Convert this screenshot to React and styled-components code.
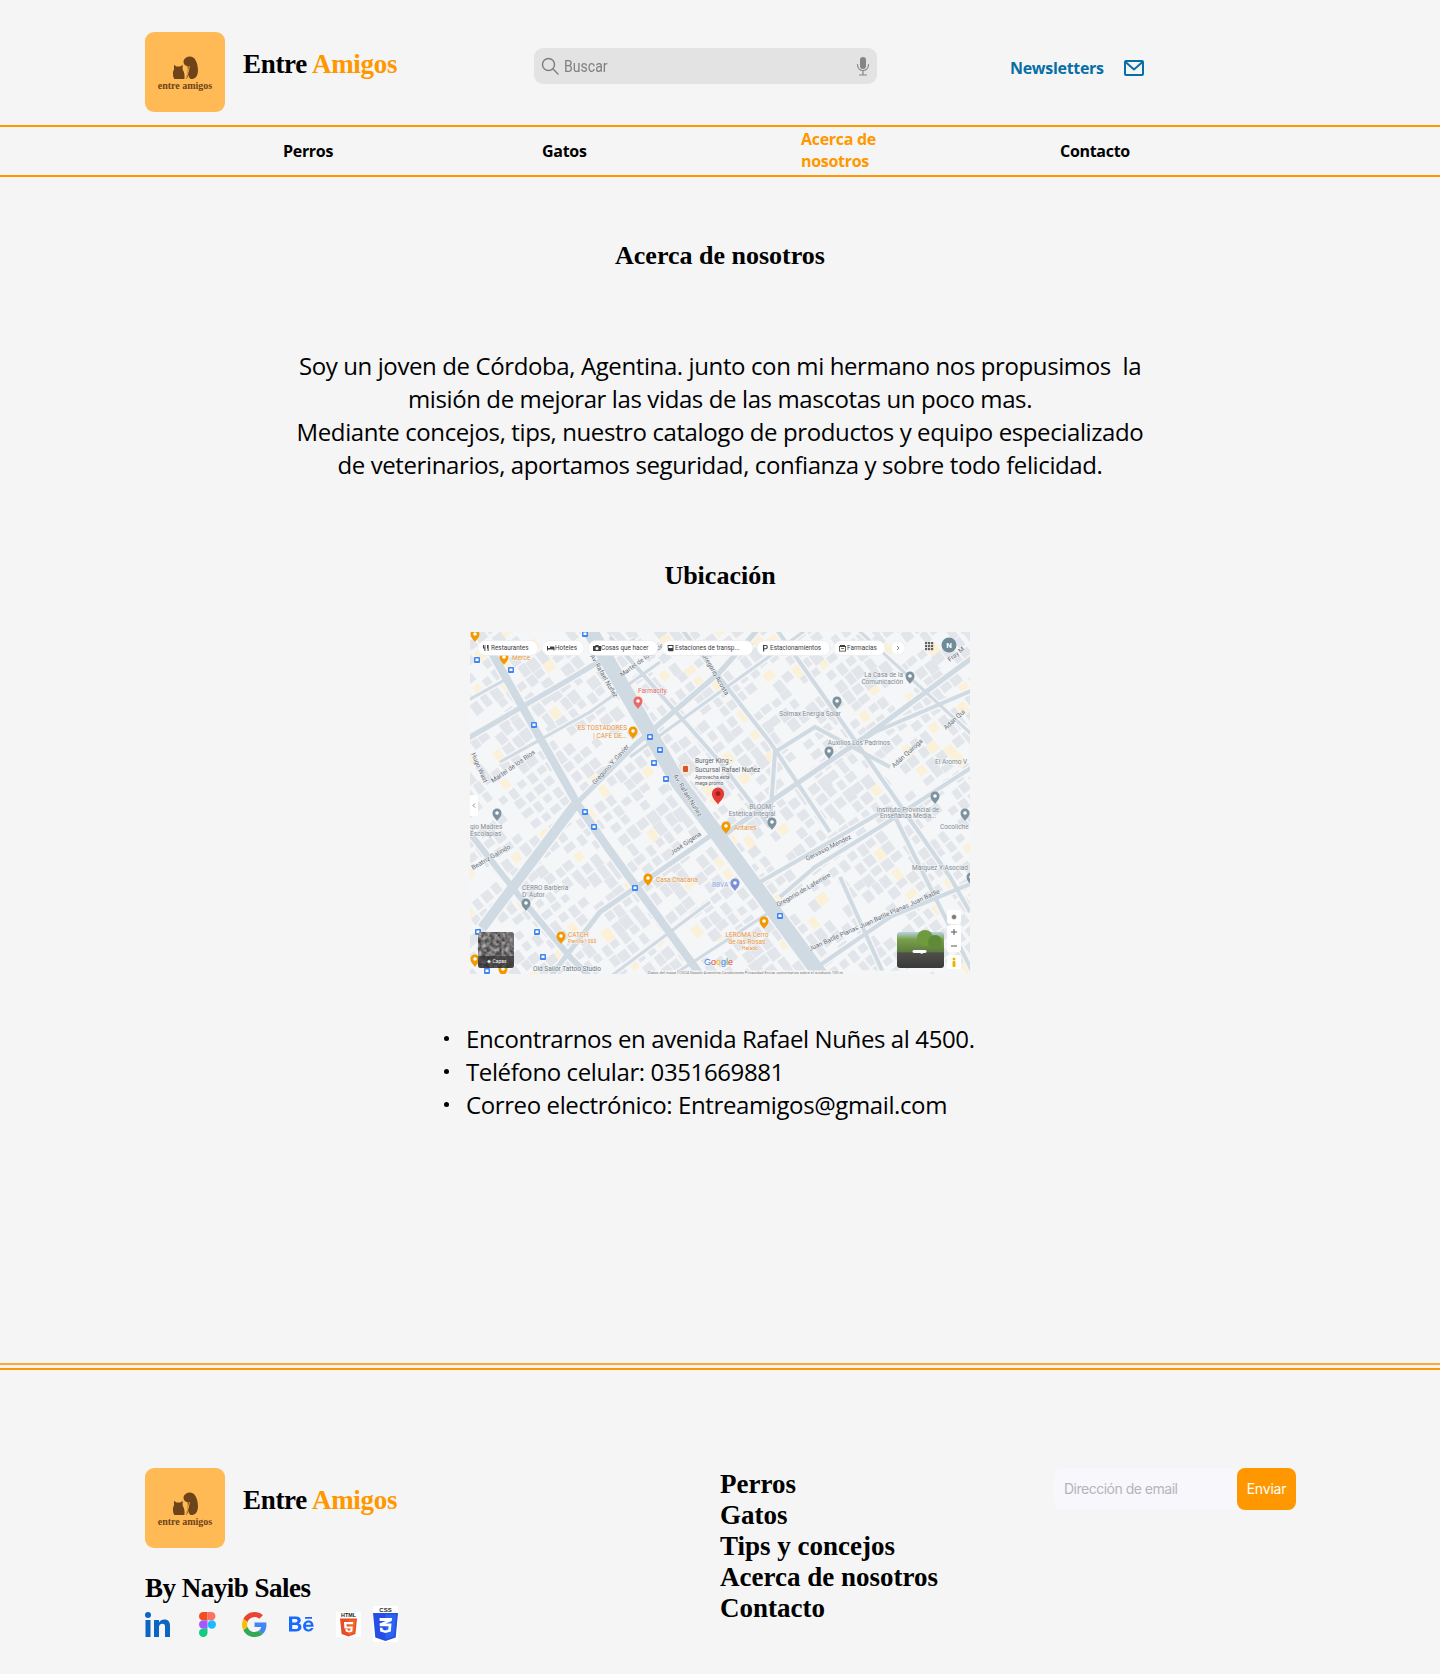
import React from "react";
import styled, { createGlobalStyle } from "styled-components";

const SERIF = `"Liberation Serif", "DejaVu Serif", serif`;
const SANS = `"Open Sans", "Noto Sans", sans-serif`;
const ORANGE = "#ff9800";

const Global = createGlobalStyle`
  html, body { margin: 0; padding: 0; background: #f5f5f5; }
  body { font-family: ${SANS}; color: #000; }
  * { box-sizing: border-box; }
`;

const Page = styled.div`
  width: 1440px;
  height: 1674px;
  background: #f5f5f5;
  display: flex;
  flex-direction: column;
`;

const Header = styled.header`
  height: 125px;
  padding: 32px 0 0 145px;
  display: flex;
  align-items: flex-start;
`;

const BrandBlock = styled.div`
  display: flex;
  align-items: flex-start;
  gap: 18px;
  width: ${p => p.$w || "auto"};
`;

const LogoTile = styled.div`
  width: 80px;
  height: 80px;
  border-radius: 9px;
  background: #ffba55;
  display: flex;
  flex-direction: column;
  align-items: center;
  justify-content: flex-start;
  padding-top: 24px;
  color: #6e4319;
`;

const LogoWords = styled.span`
  font-family: ${SERIF};
  font-weight: 700;
  font-size: 10px;
  line-height: 11px;
  margin-top: 1px;
  white-space: nowrap;
`;

const BrandTitle = styled.div`
  font-family: ${SERIF};
  font-weight: 700;
  font-size: 27px;
  letter-spacing: -0.3px;
  line-height: 32px;
  margin-top: 16px;
  white-space: nowrap;
`;

const Accent = styled.span`
  color: ${ORANGE};
`;

const Search = styled.div`
  width: 343px;
  height: 36px;
  margin-top: 16px;
  border-radius: 9px;
  background: #e3e3e3;
  display: flex;
  align-items: center;
  padding: 0 7px;
  color: #808080;
`;

const SearchText = styled.span`
  flex: 1;
  margin-left: 5px;
  font-family: Roboto, sans-serif;
  font-size: 16px;
  transform: scaleX(0.88);
  transform-origin: left center;
`;

const NewsLink = styled.div`
  margin-left: 133px;
  margin-top: 25px;
  display: flex;
  align-items: center;
  gap: 20px;
  color: #076fa5;
  font-weight: 700;
  font-size: 16px;
  letter-spacing: -0.3px;
  line-height: 22px;
`;

const Nav = styled.nav`
  height: 52px;
  border-top: 2px solid ${ORANGE};
  border-bottom: 2px solid ${ORANGE};
  display: grid;
  grid-template-columns: 283px 259px 259px 259px 1fr;
  align-items: center;
`;

const NavItem = styled.div`
  grid-column: ${p => p.$col};
  font-weight: 700;
  font-size: 16px;
  letter-spacing: -0.3px;
  line-height: 22px;
  color: ${p => (p.$active ? ORANGE : "#000")};
  padding-bottom: ${p => (p.$active ? 2 : 0)}px;
`;

const Main = styled.main`
  display: flex;
  flex-direction: column;
  align-items: center;
  flex: 1;
`;

const Heading = styled.h2`
  font-family: ${SERIF};
  font-weight: 700;
  font-size: 26px;
  line-height: 32px;
  margin: ${p => p.$m};
  text-align: center;
`;

const Lead = styled.p`
  font-size: 24px;
  line-height: 33px;
  letter-spacing: -0.39px;
  text-align: center;
  white-space: pre-wrap;
  margin: 77px 0 0;
`;

const MapFrame = styled.div`
  width: 500px;
  height: 342px;
  margin-top: 40px;
  overflow: hidden;
  flex: none;
`;

const Facts = styled.ul`
  list-style: none;
  margin: 48px 0 0;
  padding: 0;
  align-self: flex-start;
  margin-left: 442px;
  font-size: 24px;
  line-height: 33px;
  letter-spacing: -0.39px;
`;

const Fact = styled.li`
  display: flex;
  align-items: center;
  &::before {
    content: "";
    width: 5px;
    height: 5px;
    border-radius: 50%;
    background: #000;
    margin-left: 2px;
    margin-right: 17px;
  }
`;

const RuleStack = styled.div`
  display: flex;
  flex-direction: column;
  gap: 3px;
`;

const Rule = styled.div`
  height: 2px;
  background: ${p => (p.$soft ? "#ffa733" : ORANGE)};
`;

const Footer = styled.footer`
  height: 304px;
  padding: 98px 0 0 145px;
  display: flex;
  align-items: flex-start;
`;

const FooterLeft = styled.div`
  width: 575px;
`;

const Author = styled.div`
  font-family: ${SERIF};
  font-weight: 700;
  font-size: 27px;
  letter-spacing: -0.5px;
  line-height: 32px;
  margin-top: 24px;
`;

const Icons = styled.div`
  display: flex;
  align-items: center;
  margin-top: 2px;
  height: 36px;
`;

const IconSlot = styled.span`
  display: flex;
  margin-left: ${p => p.$ml || 0}px;
`;

const FooterLinks = styled.ul`
  list-style: none;
  padding: 0;
  margin: 1px 0 0;
  width: 334px;
  font-family: ${SERIF};
  font-weight: 700;
  font-size: 27px;
  line-height: 31px;
`;

const Newsletter = styled.div`
  width: 242px;
  height: 42px;
  display: flex;
  border-radius: 8px;
  background: #f8f8fc;
`;

const EmailHint = styled.span`
  flex: 1;
  padding-left: 10px;
  font-family: Inter, sans-serif;
  font-size: 14px;
  line-height: 42px;
  color: #b4b4bb;
  letter-spacing: -0.5px;
`;

const SendButton = styled.span`
  width: 59px;
  border-radius: 8px;
  background: ${ORANGE};
  color: #fff;
  font-family: Inter, sans-serif;
  font-size: 14px;
  letter-spacing: -0.2px;
  line-height: 42px;
  text-align: center;
`;

/* ---------- drawings ---------- */

const PetsMark = () => (
  <svg width="27" height="23" viewBox="0 0 27 24" fill="#6e4319">
    <path d="M11.500 5C12.500 1 18-1 21.500 1.500 24.500 3.500 26.500 9 26.500 15 26.500 21 23.500 24 19.500 24 17.800 24 17 22 16.500 19.500 16 22 15 24 13.500 24 15.500 20 16.500 15 15.500 10.500 13 10.500 11 8 11.500 5z" />
    <path d="M1.500 9l2.500 2h4l2.500-2v5c1.800 3 2.600 7 1.800 10H2C0 21 0 16 1.500 14z" />
    <path d="M17.500 10.500c-.6 4-1.500 9-4 13.500" fill="none" stroke="#ffba55" strokeWidth="0.9" />
  </svg>
);

const Logo = () => (
  <LogoTile>
    <PetsMark />
    <LogoWords>entre amigos</LogoWords>
  </LogoTile>
);

const SearchGlyph = () => (
  <svg width="18" height="18" viewBox="0 0 18 18" fill="none" stroke="#7d7d7d" strokeWidth="1.4" strokeLinecap="round">
    <circle cx="7.500" cy="7.500" r="6" />
    <path d="M12 12l5 5" />
  </svg>
);

const MicGlyph = () => (
  <svg width="14" height="20" viewBox="0 0 14 20" fill="none" stroke="#858585" strokeWidth="1.2" strokeLinecap="round">
    <rect x="4" y="1" width="6" height="12" rx="3" fill="#858585" stroke="none" />
    <path d="M1.500 8.500c0 8 11 8 11 0M7 15v3.500M3.500 19h7" />
  </svg>
);

const MailGlyph = () => (
  <svg width="20" height="16" viewBox="0 0 20 16" fill="none" stroke="#076fa5" strokeWidth="2">
    <rect x="1" y="1" width="18" height="14" rx="1" />
    <path d="M1.500 2l8.500 7.500L18.500 2" />
  </svg>
);

const LinkedInIcon = () => (
  <svg width="25" height="25" viewBox="0 0 25 25" fill="#0a66c2">
    <circle cx="3" cy="3" r="3" />
    <rect x="0.500" y="8" width="5" height="17" />
    <path d="M9 8h5v2.500C15 8.800 17 7.600 19.500 7.600 23.500 7.600 25 10.200 25 14v11h-5V15c0-2-.6-3.200-2.500-3.200-2.300 0-3.500 1.400-3.500 3.600V25H9z" />
  </svg>
);

const FigmaIcon = () => (
  <svg width="17" height="25" viewBox="0 0 17 25">
    <path d="M0 4.200A4.200 4.200 0 0 1 4.200 0h4.300v8.300H4.200A4.200 4.200 0 0 1 0 4.200z" fill="#f24e1e" />
    <path d="M8.500 0h4.300a4.200 4.200 0 0 1 0 8.300H8.500z" fill="#ff7262" />
    <path d="M0 12.500a4.200 4.200 0 0 1 4.200-4.200h4.300v8.400H4.200A4.200 4.200 0 0 1 0 12.500z" fill="#a259ff" />
    <circle cx="12.800" cy="12.500" r="4.200" fill="#1abcfe" />
    <path d="M0 20.800a4.200 4.200 0 0 1 4.200-4.100h4.300v4.100a4.200 4.200 0 0 1-8.500 0z" fill="#0acf83" />
  </svg>
);

const GoogleIcon = () => (
  <svg width="25" height="25" viewBox="0 0 48 48">
    <path fill="#ea4335" d="M24 9.500c3.500 0 6.700 1.300 9.200 3.400l6.900-6.900C35.900 2.200 30.300 0 24 0 14.600 0 6.500 5.400 2.600 13.200l8 6.200C12.500 13.600 17.800 9.500 24 9.500z" />
    <path fill="#4285f4" d="M46.900 24.500c0-1.600-.1-3.100-.4-4.500H24v9h12.900c-.6 3-2.300 5.500-4.800 7.200l7.700 6c4.500-4.200 7.100-10.300 7.100-17.700z" />
    <path fill="#fbbc05" d="M10.600 28.600c-.5-1.400-.8-3-.8-4.600s.3-3.200.8-4.600l-8-6.200C.9 16.500 0 20.100 0 24s.9 7.500 2.600 10.800z" />
    <path fill="#34a853" d="M24 48c6.500 0 11.900-2.100 15.900-5.800l-7.700-6c-2.200 1.400-4.900 2.300-8.100 2.300-6.200 0-11.500-4.200-13.400-9.900l-8 6.200C6.500 42.600 14.600 48 24 48z" />
  </svg>
);

const BehanceIcon = () => (
  <svg width="25" height="16" viewBox="0 0 25 16" fill="#1769ff">
    <path d="M0 .5h7c3 0 4.800 1.300 4.800 3.800 0 1.500-.8 2.500-2 3.100 1.700.5 2.600 1.800 2.600 3.600 0 3-2.300 4.400-5.300 4.400H0zm3.200 2.600v3.400h3.300c1.200 0 2-.5 2-1.700S7.700 3.100 6.500 3.100zm0 5.800v4h3.700c1.400 0 2.300-.6 2.300-2s-.9-2-2.300-2z" />
    <path d="M16 1h7v1.800h-7zM19.500 4.500c3.500 0 5.300 2.600 5.100 6.200h-7.700c.1 1.700 1.100 2.800 2.700 2.800 1.200 0 2-.5 2.300-1.400h2.500c-.7 2.300-2.500 3.500-4.900 3.500-3.300 0-5.400-2.300-5.400-5.500 0-3.100 2.200-5.600 5.400-5.600zm-2.600 4.300h5c-.2-1.500-1-2.300-2.400-2.300-1.500 0-2.400.9-2.600 2.300z" />
  </svg>
);

const Html5Icon = () => (
  <svg width="25" height="25" viewBox="0 0 25 25">
    <rect width="25" height="25" fill="#fff" />
    <text x="12.500" y="5.200" textAnchor="middle" fontFamily="Liberation Sans" fontWeight="700" fontSize="5.400" fill="#222">HTML</text>
    <path d="M4 6.500h17l-1.600 15.500-6.900 2.500-6.900-2.500z" fill="#e44d26" />
    <path d="M12.500 7.700h7.100l-1.300 13.400-5.800 2.100z" fill="#f16529" />
    <path d="M8 10h9.200l-.2 2.200h-6.500l.2 2.300h6.100l-.5 5-3.300 1-3.300-1-.2-2.500h2l.1 1.200 1.400.5 1.400-.5.2-1.800H8.400z" fill="#fff" />
  </svg>
);

const Css3Icon = () => (
  <svg width="25" height="36" viewBox="0 0 25 36">
    <rect width="25" height="36" fill="#fff" />
    <text x="12.500" y="6" textAnchor="middle" fontFamily="Liberation Sans" fontWeight="700" fontSize="6" fill="#222">CSS</text>
    <path d="M0 7h25l-2.300 24.500L12.500 35 2.300 31.500z" fill="#264de4" />
    <path d="M12.500 8.500h10.700l-2 21.700-8.700 2.800z" fill="#2965f1" />
    <path d="M6.500 12h12.500l-.3 3-6 2.600h5.800l-.7 7.800-5.300 1.700-5.300-1.700-.3-3.700h2.600l.2 1.900 2.800.8 2.800-.8.300-3.300H6.800l-.2-2.700 6.100-2.600H6.700z" fill="#fff" />
  </svg>
);

/* ---------- the map picture ---------- */

const ROADS = [
  [[118, -5], [208, 150], [250, 206], [352, 345], 15],
  [[18, 14], [108, 173], [138, 216], [232, 345], 8],
  [[12, 296], [105, 173], 10],
  [[105, 173], [165, 113], [250, 40], [290, -5], 5],
  [[-5, 108], [95, 50], [165, 8], 5],
  [[-5, 195], [50, 265], [100, 325], [120, 345], 6],
  [[80, 345], [130, 280], [210, 225], [260, 190], 5],
  [[-5, 70], [40, 45], 3],
  [[30, 130], [120, 80], [190, 30], 3],
  [[178, 110], [275, 240], 4],
  [[140, 5], [250, 130], [300, 195], 4],
  [[210, -5], [300, 110], [360, 200], 4],
  [[305, -5], [400, 130], [480, 245], [500, 280], 4],
  [[385, -5], [510, 110], 3],
  [[160, 125], [250, 60], [340, -5], 3],
  [[250, 206], [300, 170], [395, 105], [510, 20], 5],
  [[300, 190], [305, 120], [345, 95], [420, 135], 4],
  [[310, 265], [345, 235], [410, 195], [510, 130], 4],
  [[290, 250], [360, 210], [420, 175], 4],
  [[370, 245], [415, 345], 4],
  [[340, 340], [420, 285], [505, 250], 4],
  [[350, 135], [405, 100], [510, 55], 4],
  [[420, 175], [475, 285], [505, 345], 4],
  [[200, 345], [300, 280], [340, 255], 3],
  [[140, 345], [240, 270], 3],
];

const roadPath = r => "M" + r.slice(0, -1).map(p => p.join(" ")).join("L");

const buildBlocks = () => {
  const out = [];
  let seed = 42;
  const rnd = () => {
    seed = (seed * 9301 + 49297) % 233280;
    return seed / 233280;
  };
  for (let u = -420; u < 520; u += 12) {
    for (let v = -60; v < 640; v += 13) {
      const r = rnd();
      const w = 7 + rnd() * 6;
      const h = 7 + rnd() * 4;
      const cream = rnd() < 0.1;
      const ox = rnd() * 2;
      const oy = rnd() * 2;
      if (r < 0.24) continue;
      out.push({ u: u + oy, v: v + ox, w, h, cream });
    }
  }
  return out;
};
const BLOCKS = buildBlocks();

const Label = styled.text`
  font-family: Roboto, "Liberation Sans", sans-serif;
  font-size: ${p => p.$s || 6.5}px;
  fill: ${p => p.$c || "#7f8a93"};
  paint-order: stroke;
  stroke: #f5f6f8;
  stroke-width: 1px;
`;

const Chip = ({ x, w, children, icon }) => (
  <g>
    <rect x={x} y={8.500} width={w} height={15} rx={7.500} fill="#fff" stroke="#dfe1e4" strokeWidth="0.4" />
    <g transform={`translate(${x + 5} 13)`} fill="#3c4043">{icon}</g>
    <text x={x + 13} y={18.300} fontFamily="Roboto" fontSize="6.400" fill="#3c4043">{children}</text>
  </g>
);

const Pin = ({ x, y, c = "#7c929e", s = 1, inner = "#fff" }) => (
  <g transform={`translate(${x} ${y}) scale(${s})`}>
    <path d="M0 7C-1.500 4.500-4.500 2.500-4.500-1A4.500 4.500 0 0 1 4.500-1C4.500 2.500 1.500 4.500 0 7z" fill={c} />
    <circle cx="0" cy="-1" r="1.800" fill={inner} />
  </g>
);

const Bus = ({ x, y }) => (
  <g>
    <rect x={x - 3} y={y - 3} width="6" height="6" rx="1" fill="#3f86f0" />
    <rect x={x - 1.500} y={y - 1.500} width="3" height="2.500" fill="#fff" />
  </g>
);

const ORANGE_PIN = "#f29900";
const ORANGE_TXT = "#e8953a";

const MapPicture = () => (
  <svg width="500" height="342" viewBox="0 0 500 342">
    <defs>
      <filter id="soft" x="0" y="0" width="1" height="1">
        <feGaussianBlur stdDeviation="0.4" />
      </filter>
      <filter id="grain" x="0" y="0" width="1" height="1">
        <feTurbulence type="fractalNoise" baseFrequency="0.25" numOctaves="2" seed="4" />
        <feColorMatrix values="0 0 0 0 0.45  0 0 0 0 0.42  0 0 0 0 0.4  1.6 0 0 0 -0.35" />
      </filter>
      <linearGradient id="thumbB" x1="0" y1="0" x2="0" y2="1">
        <stop offset="0" stopColor="#b9d3e4" />
        <stop offset="0.2" stopColor="#7aa04c" />
        <stop offset="0.55" stopColor="#5d7b3e" />
        <stop offset="0.58" stopColor="#4e4e4a" />
        <stop offset="1" stopColor="#3a3a38" />
      </linearGradient>
    </defs>
    <rect width="500" height="342" fill="#f5f6f8" />
    <g filter="url(#soft)">
      <g transform="rotate(52)">
        {BLOCKS.map((b, i) => (
          <rect key={i} x={b.v} y={b.u} width={b.w} height={b.h} fill={b.cream ? "#fbf1d8" : "#e2e5ea"} />
        ))}
      </g>
      {ROADS.map((r, i) => (
        <path key={i} d={roadPath(r)} fill="none" stroke="#f5f6f8" strokeWidth={r[r.length - 1] + 3} strokeLinejoin="round" />
      ))}
      {ROADS.map((r, i) => (
        <path key={i} d={roadPath(r)} fill="none" stroke="#d0dae2" strokeWidth={r[r.length - 1]} strokeLinejoin="round" />
      ))}
    </g>

    {/* street names */}
    <Label x="23" y="151" transform="rotate(-35 23 151)" $c="#5f6b75">Martel de los Ríos</Label>
    <Label x="1" y="122" transform="rotate(66 1 122)" $c="#5f6b75">Hugo Wast</Label>
    <Label x="3" y="238" transform="rotate(-30 3 238)" $c="#5f6b75">Beatriz Galindo</Label>
    <Label x="125" y="153" transform="rotate(-48 125 153)" $c="#5f6b75">Gregorio Y. Gavier</Label>
    <Label x="120" y="24" transform="rotate(60 120 24)" $c="#5f6b75">Av. Rafael Nuñez</Label>
    <Label x="203" y="144" transform="rotate(58 203 144)" $c="#5f6b75">Av. Rafael Nuñez</Label>
    <Label x="152" y="45" transform="rotate(-36 152 45)" $c="#5f6b75">Martel de los Ríos</Label>
    <Label x="232" y="23" transform="rotate(60 232 23)" $c="#5f6b75">Gregorio Acosta</Label>
    <Label x="202" y="223" transform="rotate(-34 202 223)" $c="#5f6b75">José Gigena</Label>
    <Label x="308" y="275" transform="rotate(-30 308 275)" $c="#5f6b75">Gregorio de Laferrere</Label>
    <Label x="337" y="229" transform="rotate(-27 337 229)" $c="#5f6b75">Gervasio Méndez</Label>
    <Label x="340" y="319" transform="rotate(-24 340 319)" $c="#5f6b75">Juan Batlle Planas Juan Batlle Planas Juan Batlle</Label>
    <Label x="424" y="136" transform="rotate(-42 424 136)" $c="#5f6b75">Adán Quiroga</Label>
    <Label x="476" y="98" transform="rotate(-42 476 98)" $c="#5f6b75">Adán Qui</Label>
    <Label x="480" y="30" transform="rotate(-40 480 30)" $c="#5f6b75">Fray M</Label>
    <Label x="63" y="339" $c="#6b7680">Old Sailor Tattoo Studio</Label>

    {/* transit stops */}
    {[[41, 38], [64, 93], [180, 105], [190, 118], [184, 131], [196, 147], [7, 28], [115, 2], [115, 180], [124, 195], [165, 256], [67, 300], [8, 300], [73, 325], [17, 339], [310, 284]].map(([x, y], i) => (
      <Bus key={i} x={x} y={y} />
    ))}

    {/* orange places */}
    <Pin x={5} y={3} c={ORANGE_PIN} />
    <Pin x={34} y={26} c={ORANGE_PIN} />
    <Label x="42" y="28" $c={ORANGE_TXT}>Merce</Label>
    <Pin x={163} y={100} c={ORANGE_PIN} />
    <Label x="157" y="98" textAnchor="end" $c={ORANGE_TXT}>ES TOSTADORES</Label>
    <Label x="157" y="106" textAnchor="end" $c={ORANGE_TXT}>| CAFÉ DE...</Label>
    <Pin x={178} y={247} c={ORANGE_PIN} />
    <Label x="186" y="250" $c={ORANGE_TXT}>Casa Chacana</Label>
    <Pin x={91} y={305} c={ORANGE_PIN} />
    <Label x="98" y="305" $c={ORANGE_TXT}>CATCH</Label>
    <Label x="98" y="311" $s={5} $c={ORANGE_TXT}>Parrilla • $$$</Label>
    <Pin x={256} y={195} c={ORANGE_PIN} />
    <Label x="264" y="198" $c={ORANGE_TXT}>Antares</Label>
    <Pin x={294} y={290} c={ORANGE_PIN} />
    <Label x="277" y="305" textAnchor="middle" $c={ORANGE_TXT}>LEROMA Cerro</Label>
    <Label x="277" y="312" textAnchor="middle" $c={ORANGE_TXT}>de las Rosas</Label>
    <Label x="280" y="318" textAnchor="middle" $s={5} $c={ORANGE_TXT}>Helado</Label>
    <Pin x={5} y={328} c={ORANGE_PIN} />
    <Pin x={33} y={338} c={ORANGE_PIN} />

    {/* red and pink */}
    <Pin x={168} y={70} c="#ea6a6a" />
    <Label x="168" y="61" $c="#e06a6a">Farmacity</Label>
    <Pin x={248} y={163} c="#e53935" s={1.35} inner="#a3201c" />

    {/* burger king */}
    <rect x="210" y="131" width="11" height="12" rx="2" fill="#efe9e0" stroke="#ccc" strokeWidth="0.5" />
    <rect x="213" y="134" width="5" height="6" rx="1" fill="#d9542b" />
    <Label x="225" y="131" $c="#5f6368">Burger King -</Label>
    <Label x="225" y="140" $c="#5f6368">Sucursal Rafael Nuñez</Label>
    <Label x="225" y="147" $s={5} $c="#5f6368">Aprovecha esta</Label>
    <Label x="225" y="153" $s={5} $c="#5f6368">mega promo</Label>

    {/* grey places */}
    <Pin x={440} y={45} />
    <Label x="433" y="45" textAnchor="end">La Casa de la</Label>
    <Label x="433" y="52" textAnchor="end">Comunicación</Label>
    <Pin x={367} y={70} />
    <Label x="340" y="84" textAnchor="middle">Solmax Energía Solar</Label>
    <Pin x={359} y={120} />
    <Label x="389" y="113" textAnchor="middle">Auxilios Los Padrinos</Label>
    <Pin x={465} y={165} />
    <Label x="465" y="132">El Aromo V</Label>
    <Pin x={27} y={182} />
    <Label x="0" y="197">gio Madres</Label>
    <Label x="0" y="204">Escolapias</Label>
    <Pin x={56} y={272} />
    <Label x="52" y="258">CERRO Barbería</Label>
    <Label x="52" y="265">D' Autor</Label>
    <Pin x={302} y={191} />
    <Label x="292" y="177" textAnchor="middle">BLOOM -</Label>
    <Label x="282" y="184" textAnchor="middle">Estética Integral</Label>
    <Label x="438" y="180" textAnchor="middle">Instituto Provincial de</Label>
    <Label x="438" y="186" textAnchor="middle">Enseñanza Media...</Label>
    <Pin x={495} y={182} />
    <Label x="470" y="197">Cocoliche</Label>
    <Label x="442" y="238">Márquez Y Asociad</Label>
    <Pin x={501} y={246} />
    <Pin x={265} y={252} c="#7b8fd8" />
    <Label x="242" y="255" $c="#8ea0e0">BBVA</Label>

    {/* top chips */}
    <Chip x={8} w={60} icon={<path d="M0 0h1v2.500h.6V0h.8v6h-1V3.500H0zM4 0h1.600v6h-1V3.500H4z" />}>Restaurantes</Chip>
    <Chip x={72} w={42} icon={<path d="M0 1h1v2h2V1.500h3.500a1 1 0 0 1 1 1V5.500H6.500V4.500H1v1H0z" />}>Hoteles</Chip>
    <Chip x={118} w={70} icon={<path fillRule="evenodd" d="M0 1h2l.8-1h2.400L6 1h2v5H0zm4 1a1.500 1.500 0 1 0 0 3 1.500 1.500 0 0 0 0-3z" />}>Cosas que hacer</Chip>
    <Chip x={192} w={91} icon={<path fillRule="evenodd" d="M.5 0h6v6h-1v.5h-1V6h-1v.5h-1V6h-1.500zm1 1v2h4V1z" />}>Estaciones de transp...</Chip>
    <Chip x={287} w={73} icon={<path fillRule="evenodd" d="M1 0h2.800a2.100 2.100 0 0 1 0 4.200H2.200V6.500H1zm1.200 1v2.200h1.500a1.100 1.100 0 0 0 0-2.200z" />}>Estacionamientos</Chip>
    <Chip x={364} w={51} icon={<path fillRule="evenodd" d="M1 0h5v1h1v5.500H0V1h1zm-.2 2v3.700h5.400V2zM2 3h3v.8H2z" />}>Farmacias</Chip>
    <circle cx="428" cy="16" r="7" fill="#fff" stroke="#dfe1e4" strokeWidth="0.4" />
    <path d="M427 14l2 2-2 2" fill="none" stroke="#555" strokeWidth="0.7" />
    {[0, 3, 6].map(a => [0, 3, 6].map(b => (
      <rect key={`${a}${b}`} x={455 + a} y={10 + b} width="2.200" height="2.200" fill="#5f6368" />
    )))}
    <circle cx="479" cy="13" r="7.500" fill="#6f8a98" />
    <text x="479" y="15.800" textAnchor="middle" fontFamily="Roboto" fontWeight="700" fontSize="8" fill="#fff">N</text>

    {/* left tab */}
    <rect x="0" y="163" width="8" height="21" rx="1.500" fill="#fff" />
    <path d="M5 171.500l-2 2 2 2" fill="none" stroke="#555" strokeWidth="0.7" />

    {/* layers */}
    <clipPath id="layerClip"><rect x="8" y="300" width="36" height="36" rx="3" /></clipPath>
    <g clipPath="url(#layerClip)">
      <rect x="8" y="300" width="36" height="36" fill="#3e3f42" />
      <rect x="8" y="300" width="36" height="36" filter="url(#grain)" />
      <rect x="8" y="324" width="36" height="12" fill="#2c2c2e" opacity="0.65" />
    </g>
    <text x="27" y="331" textAnchor="middle" fontFamily="Roboto" fontSize="5" fill="#fff">◈ Capas</text>

    {/* street view */}
    <rect x="427" y="300" width="47" height="36" rx="3" fill="url(#thumbB)" />
    <circle cx="455" cy="306" r="8" fill="#6f9a3e" />
    <circle cx="465" cy="310" r="7" fill="#5f8a38" />
    <path d="M444 318h11c2 0 2 3 0 3h-2l-1 1-2-1h-6c-2 0-2-3 0-3z" fill="#fff" />

    {/* controls */}
    <rect x="477" y="278" width="14" height="14" rx="3" fill="#fff" />
    <circle cx="484" cy="285" r="2.500" fill="#777" stroke="#fff" strokeWidth="0.5" />
    <rect x="477" y="293" width="14" height="27" rx="3" fill="#fff" />
    <path d="M481 300h6M484 297v6M481 314h6" stroke="#555" strokeWidth="1" />
    <rect x="477" y="323" width="14" height="14" rx="3" fill="#fff" />
    <circle cx="484" cy="327" r="1.500" fill="#f2b100" />
    <rect x="482.500" y="329" width="3" height="6" rx="1" fill="#f2b100" />

    {/* google mark */}
    <text x="234" y="333" fontFamily="Liberation Sans" fontSize="9">
      <tspan fill="#4285f4">G</tspan>
      <tspan fill="#ea4335">o</tspan>
      <tspan fill="#fbbc05">o</tspan>
      <tspan fill="#4285f4">g</tspan>
      <tspan fill="#34a853">l</tspan>
      <tspan fill="#ea4335">e</tspan>
    </text>
    <rect x="178" y="338.500" width="280" height="3.500" fill="#f5f6f8" />
    <text x="178" y="341.500" fontFamily="Roboto" fontSize="4" fill="#7a7a7a">Datos del mapa ©2024 Google    Argentina    Condiciones    Privacidad    Enviar comentarios sobre el producto    100 m</text>
  </svg>
);

const Brand = ({ width }) => (
  <BrandBlock $w={width}>
    <Logo />
    <BrandTitle>Entre <Accent>Amigos</Accent></BrandTitle>
  </BrandBlock>
);

export default function App() {
  return (
    <Page>
      <Global />
      <Header>
        <Brand width="389px" />
        <Search>
          <SearchGlyph />
          <SearchText>Buscar</SearchText>
          <MicGlyph />
        </Search>
        <NewsLink>
          Newsletters
          <MailGlyph />
        </NewsLink>
      </Header>
      <Nav>
        <NavItem $col={2}>Perros</NavItem>
        <NavItem $col={3}>Gatos</NavItem>
        <NavItem $col={4} $active>Acerca de<br />nosotros</NavItem>
        <NavItem $col={5}>Contacto</NavItem>
      </Nav>
      <Main>
        <Heading $m="63px 0 0">Acerca de nosotros</Heading>
        <Lead>
          Soy un joven de Córdoba, Agentina. junto con mi hermano nos propusimos  la<br />
          misión de mejorar las vidas de las mascotas un poco mas.<br />
          Mediante concejos, tips, nuestro catalogo de productos y equipo especializado<br />
          de veterinarios, aportamos seguridad, confianza y sobre todo felicidad.
        </Lead>
        <Heading $m="79px 0 0">Ubicación</Heading>
        <MapFrame>
          <MapPicture />
        </MapFrame>
        <Facts>
          <Fact>Encontrarnos en avenida Rafael Nuñes al 4500.</Fact>
          <Fact>Teléfono celular: 0351669881</Fact>
          <Fact>Correo electrónico: Entreamigos@gmail.com</Fact>
        </Facts>
      </Main>
      <RuleStack>
        <Rule $soft />
        <Rule />
      </RuleStack>
      <Footer>
        <FooterLeft>
          <Brand />
          <Author>By Nayib Sales</Author>
          <Icons>
            <IconSlot><LinkedInIcon /></IconSlot>
            <IconSlot $ml={29}><FigmaIcon /></IconSlot>
            <IconSlot $ml={26}><GoogleIcon /></IconSlot>
            <IconSlot $ml={22}><BehanceIcon /></IconSlot>
            <IconSlot $ml={22}><Html5Icon /></IconSlot>
            <IconSlot $ml={12}><Css3Icon /></IconSlot>
          </Icons>
        </FooterLeft>
        <FooterLinks>
          <li>Perros</li>
          <li>Gatos</li>
          <li>Tips y concejos</li>
          <li>Acerca de nosotros</li>
          <li>Contacto</li>
        </FooterLinks>
        <Newsletter>
          <EmailHint>Dirección de email</EmailHint>
          <SendButton>Enviar</SendButton>
        </Newsletter>
      </Footer>
    </Page>
  );
}
